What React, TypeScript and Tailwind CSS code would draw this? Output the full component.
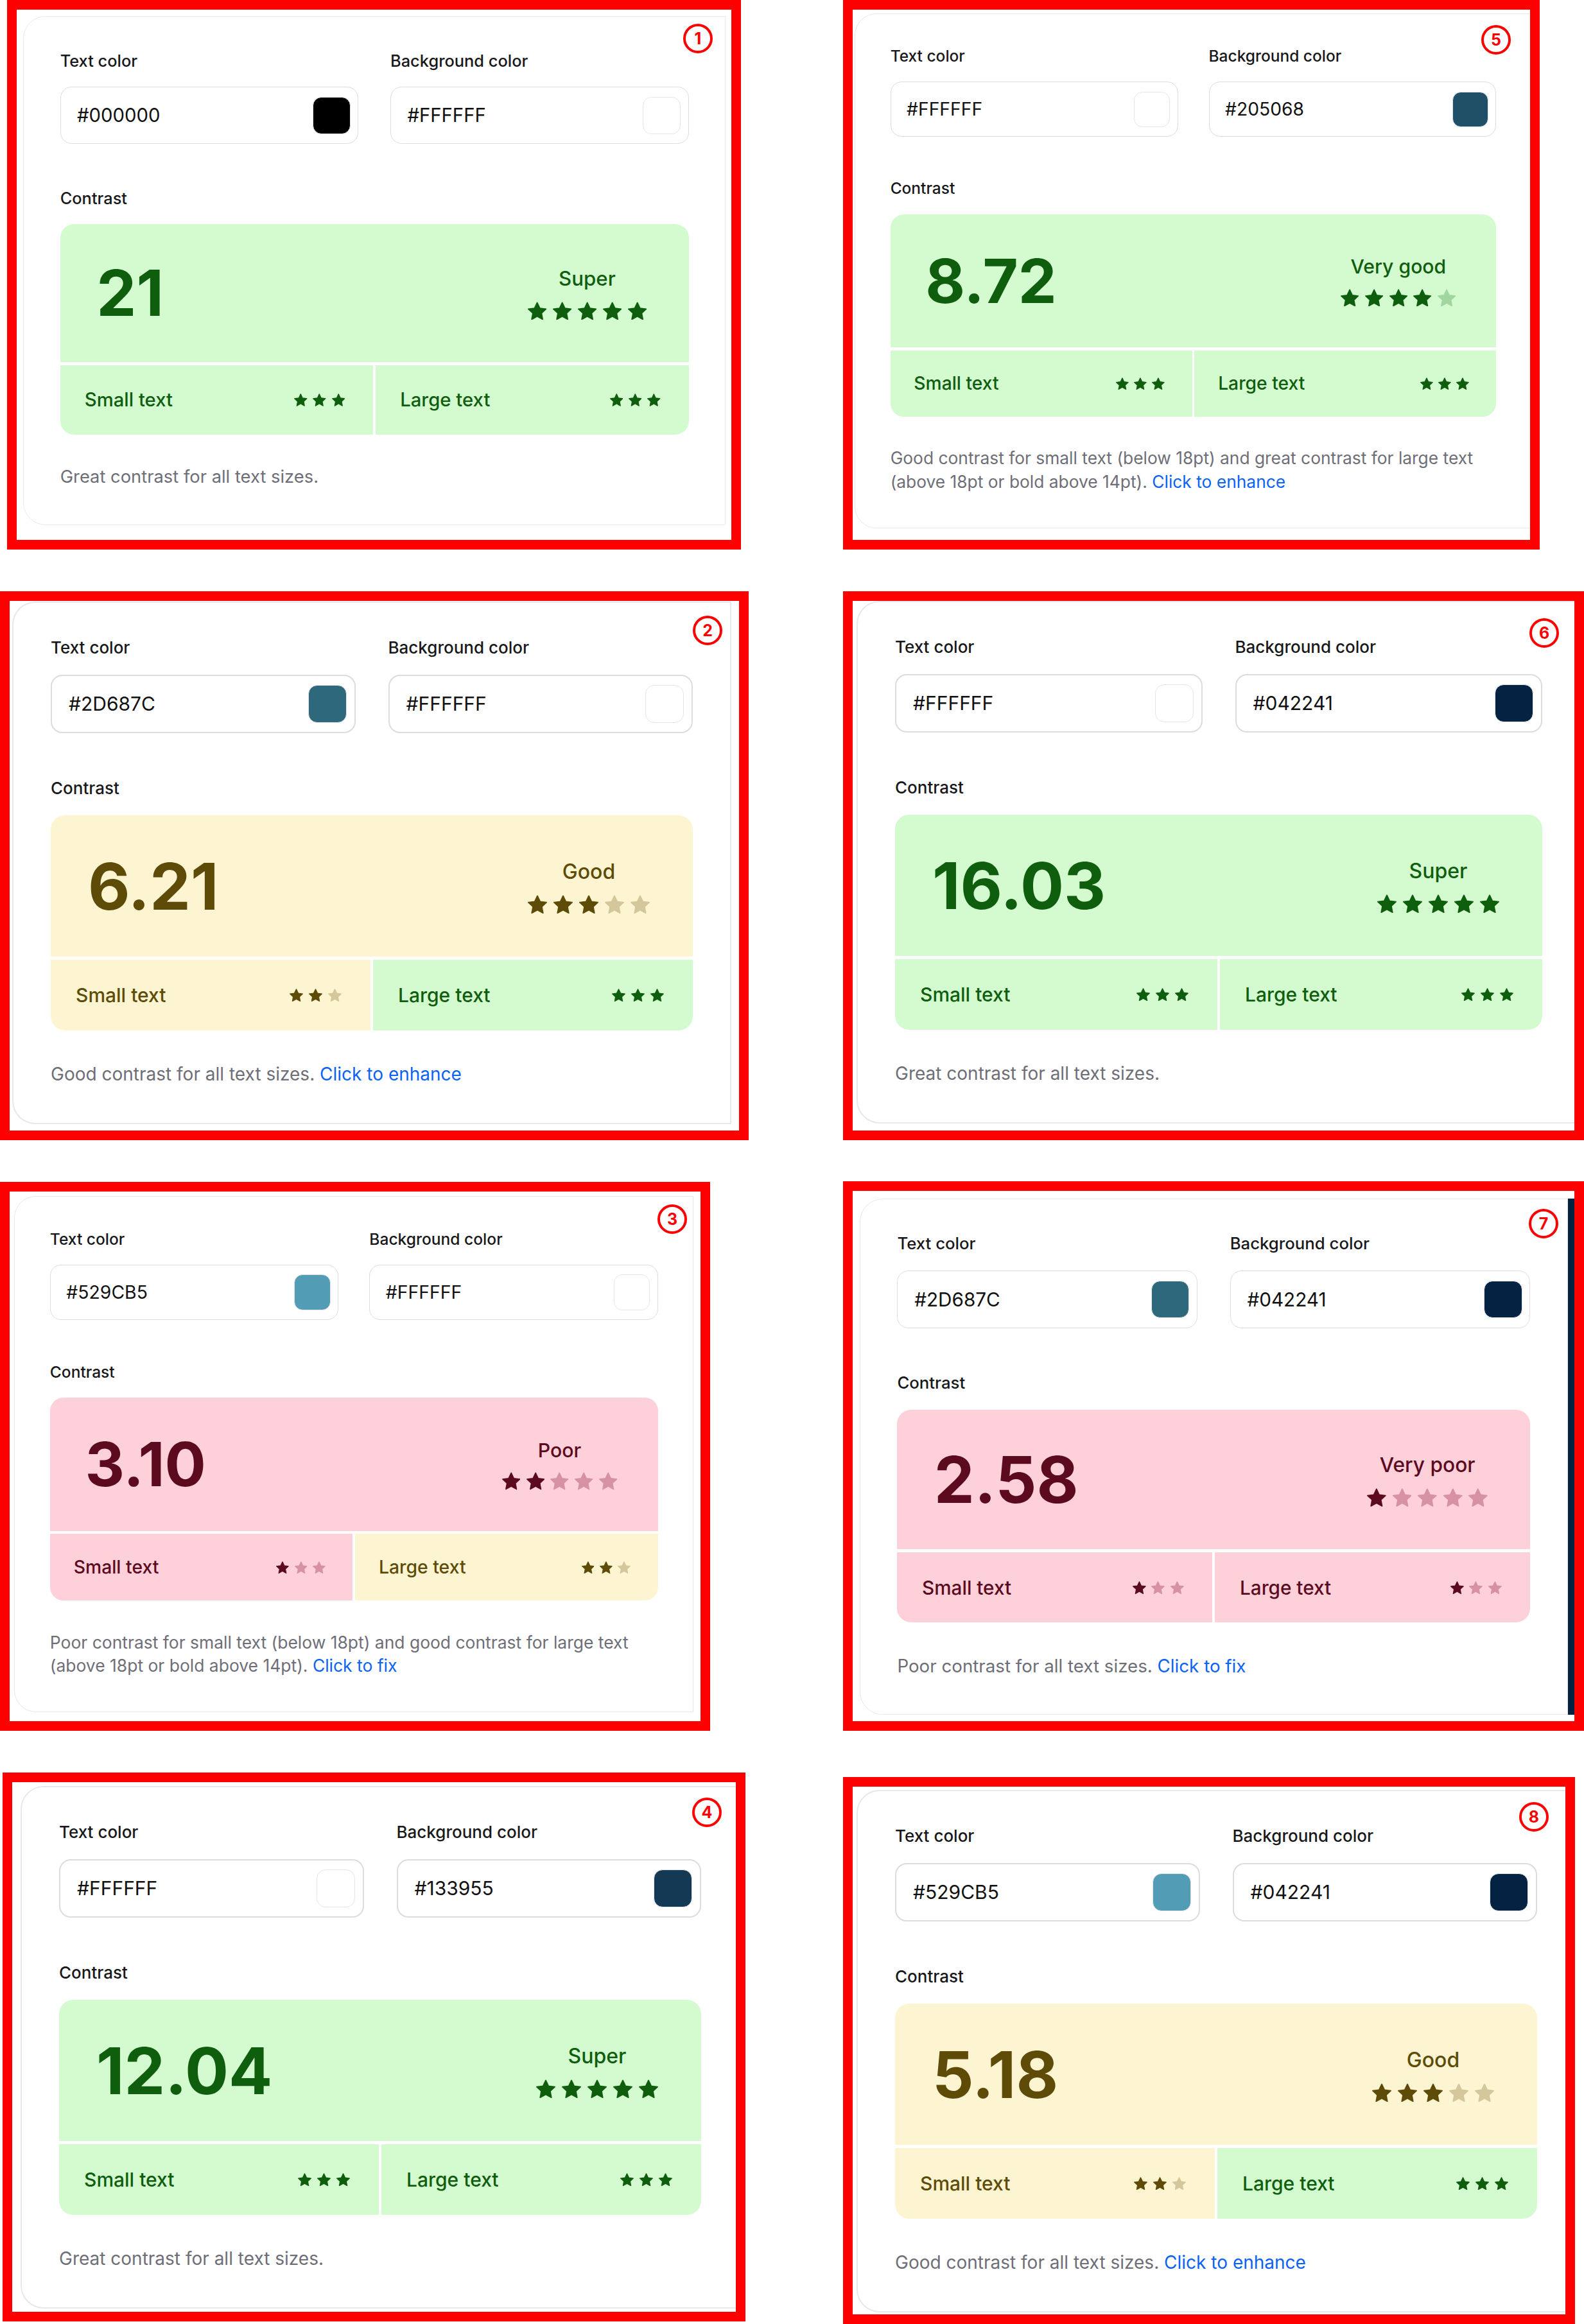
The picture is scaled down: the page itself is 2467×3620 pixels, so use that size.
type Tone = 'green' | 'yellow' | 'pink';

const tones: Record<Tone, { bg: string; text: string; on: string; off: string }> = {
  green: {
    bg: 'bg-[#d4fad0]',
    text: 'text-[#0e5e0e]',
    on: 'fill-[#0e5e0e] stroke-[#0e5e0e]',
    off: 'fill-[#a2d69f] stroke-[#a2d69f]',
  },
  yellow: {
    bg: 'bg-[#fdf5d1]',
    text: 'text-[#5e4b08]',
    on: 'fill-[#5e4b08] stroke-[#5e4b08]',
    off: 'fill-[#d3c79b] stroke-[#d3c79b]',
  },
  pink: {
    bg: 'bg-[#fdd0da]',
    text: 'text-[#5c0a1e]',
    on: 'fill-[#5c0a1e] stroke-[#5c0a1e]',
    off: 'fill-[#d692a2] stroke-[#d692a2]',
  },
};

type Rate = { tone: Tone; stars: number };

type Sample = {
  n: number;
  frame: string;
  inset: string;
  badge: string;
  zoom: string;
  width: string;
  strip?: boolean;
  fg: string;
  bg: string;
  ratio: string;
  rating: string;
  main: Rate;
  small: Rate;
  large: Rate;
  note: string;
  link?: string;
};

// reading order: left column 1-4, right column 5-8
const samples: Sample[] = [
  {
    n: 1, frame: 'ml-[11px] w-[1143px] h-[856px]', inset: 'pl-[10px] pt-[10px]', badge: 'top-[22px] right-[29px]',
    zoom: '[zoom:0.977]', width: 'w-[1120px]',
    fg: '#000000', bg: '#FFFFFF', ratio: '21', rating: 'Super',
    main: { tone: 'green', stars: 5 }, small: { tone: 'green', stars: 3 }, large: { tone: 'green', stars: 3 },
    note: 'Great contrast for all text sizes.',
  },
  {
    n: 5, frame: 'w-[1085px] h-[856px]', inset: 'pl-[3px] pt-[6px]', badge: 'top-[24px] right-[30px]',
    zoom: '[zoom:0.942]', width: 'w-[1120px]',
    fg: '#FFFFFF', bg: '#205068', ratio: '8.72', rating: 'Very good',
    main: { tone: 'green', stars: 4 }, small: { tone: 'green', stars: 3 }, large: { tone: 'green', stars: 3 },
    note: 'Good contrast for small text (below 18pt) and great contrast for large text (above 18pt or bold above 14pt).',
    link: 'Click to enhance',
  },
  {
    n: 2, frame: 'w-[1166px] h-[855px]', inset: 'pl-[4px] pt-[1px]', badge: 'top-[23px] right-[26px]',
    zoom: '[zoom:1]', width: 'w-[1120px]',
    fg: '#2D687C', bg: '#FFFFFF', ratio: '6.21', rating: 'Good',
    main: { tone: 'yellow', stars: 3 }, small: { tone: 'yellow', stars: 2 }, large: { tone: 'green', stars: 3 },
    note: 'Good contrast for all text sizes.', link: 'Click to enhance',
  },
  {
    n: 6, frame: 'w-[1154px] h-[855px]', inset: 'pl-[6px] pt-0', badge: 'top-[27px] right-[24px]',
    zoom: '[zoom:1]', width: 'w-[1128px]',
    fg: '#FFFFFF', bg: '#042241', ratio: '16.03', rating: 'Super',
    main: { tone: 'green', stars: 5 }, small: { tone: 'green', stars: 3 }, large: { tone: 'green', stars: 3 },
    note: 'Great contrast for all text sizes.',
  },
  {
    n: 3, frame: 'mt-[1px] w-[1106px] h-[855px]', inset: 'pl-[7px] pt-[7px]', badge: 'top-[20px] right-[21px]',
    zoom: '[zoom:0.945]', width: 'w-[1120px]',
    fg: '#529CB5', bg: '#FFFFFF', ratio: '3.10', rating: 'Poor',
    main: { tone: 'pink', stars: 2 }, small: { tone: 'pink', stars: 1 }, large: { tone: 'yellow', stars: 2 },
    note: 'Poor contrast for small text (below 18pt) and good contrast for large text (above 18pt or bold above 14pt).',
    link: 'Click to fix',
  },
  {
    n: 7, frame: 'w-[1154px] h-[856px]', inset: 'pl-[11px] pt-[12px]', badge: 'top-[28px] right-[25px]',
    zoom: '[zoom:0.99]', width: 'w-[1114px]', strip: true,
    fg: '#2D687C', bg: '#042241', ratio: '2.58', rating: 'Very poor',
    main: { tone: 'pink', stars: 1 }, small: { tone: 'pink', stars: 1 }, large: { tone: 'pink', stars: 1 },
    note: 'Poor contrast for all text sizes.', link: 'Click to fix',
  },
  {
    n: 4, frame: 'ml-[4px] w-[1157px] h-[855px]', inset: 'pl-[13px] pt-[6px]', badge: 'top-[24px] right-[22px]',
    zoom: '[zoom:1]', width: 'w-[1120px]',
    fg: '#FFFFFF', bg: '#133955', ratio: '12.04', rating: 'Super',
    main: { tone: 'green', stars: 5 }, small: { tone: 'green', stars: 3 }, large: { tone: 'green', stars: 3 },
    note: 'Great contrast for all text sizes.',
  },
  {
    n: 8, frame: 'mt-[7px] w-[1140px] h-[852px]', inset: 'pl-[6px] pt-[5px]', badge: 'top-[24px] right-[26px]',
    zoom: '[zoom:1]', width: 'w-[1120px]',
    fg: '#529CB5', bg: '#042241', ratio: '5.18', rating: 'Good',
    main: { tone: 'yellow', stars: 3 }, small: { tone: 'yellow', stars: 2 }, large: { tone: 'green', stars: 3 },
    note: 'Good contrast for all text sizes.', link: 'Click to enhance',
  },
];

const Star = ({ className }: { className: string }) => (
  <svg viewBox="2 2 20 19" className={className}>
    <path
      d="M12 2.8l2.85 5.95 6.55.85-4.8 4.5 1.22 6.5L12 17.4l-5.82 3.2 1.22-6.5-4.8-4.5 6.55-.85z"
      strokeWidth="1.2"
      strokeLinejoin="round"
    />
  </svg>
);

const Stars = ({ total, rate, big }: { total: number; rate: Rate; big?: boolean }) => {
  const t = tones[rate.tone];
  return (
    <div className={`flex ${big ? 'gap-[10px]' : 'gap-[9px]'}`}>
      {Array.from({ length: total }, (_, i) => (
        <Star
          key={i}
          className={`${big ? 'w-[30px] h-[29px]' : 'w-[21px] h-[20px]'} ${i < rate.stars ? t.on : t.off}`}
        />
      ))}
    </div>
  );
};

const ColorField = ({ label, value }: { label: string; value: string }) => (
  <div className="flex-1 min-w-0">
    <div className="text-[26px] leading-[36px] font-medium text-[#18181b]">{label}</div>
    <div className="mt-[24px] h-[91px] flex items-center justify-between rounded-[18px] border-2 border-[#dcdcdc] pl-[26px] pr-[12px]">
      <span className="text-[30px] text-[#111111]">{value}</span>
      <span
        className="w-[60px] h-[59px] rounded-[14px] border border-[#e6e6e6]"
        style={{ backgroundColor: value }}
      />
    </div>
  </div>
);

const SizeCell = ({ label, rate, side }: { label: string; rate: Rate; side: 'l' | 'r' }) => {
  const t = tones[rate.tone];
  return (
    <div
      className={`h-[110px] flex items-center justify-between pl-[39px] pr-[45px] ${t.bg} ${
        side === 'l' ? 'rounded-bl-[22px]' : 'rounded-br-[22px]'
      }`}
    >
      <span className={`text-[30px] font-medium ${t.text}`}>{label}</span>
      <Stars total={3} rate={rate} />
    </div>
  );
};

const Card = ({ s }: { s: Sample }) => {
  const t = tones[s.main.tone];
  return (
    <div
      className={`shrink-0 rounded-l-[36px] border-2 border-[#e8e8e8] bg-white px-[58px] pt-[52px] pb-[56px] ${s.width} ${s.zoom}`}
    >
      <div className="flex gap-[51px]">
        <ColorField label="Text color" value={s.fg} />
        <ColorField label="Background color" value={s.bg} />
      </div>

      <div className="mt-[68px] text-[26px] leading-[36px] font-medium text-[#18181b]">Contrast</div>

      <div className="mt-[24px]">
        <div className={`h-[220px] flex items-center justify-between rounded-t-[22px] pl-[58px] pr-[67px] ${t.bg}`}>
          <span className={`text-[101px] leading-none font-bold ${t.text}`}>{s.ratio}</span>
          <div className="flex flex-col items-center gap-[16px]">
            <span className={`text-[32px] leading-[40px] font-medium ${t.text}`}>{s.rating}</span>
            <Stars total={5} rate={s.main} big />
          </div>
        </div>
        <div className="mt-[5px] grid grid-cols-2 gap-[4px]">
          <SizeCell label="Small text" rate={s.small} side="l" />
          <SizeCell label="Large text" rate={s.large} side="r" />
        </div>
      </div>

      <p className="mt-[49px] text-[28px] leading-[39px] text-[#6e6e78]">
        {s.note}
        {s.link && (
          <>
            {' '}
            <span className="text-[#0b62f6]">{s.link}</span>
          </>
        )}
      </p>
    </div>
  );
};

const Frame = ({ s }: { s: Sample }) => (
  <div className={`relative overflow-hidden border-[15px] border-[#ff0000] bg-white ${s.frame}`}>
    <div className={`flex items-stretch ${s.inset}`}>
      <Card s={s} />
      {s.strip && <div className="w-[14px] shrink-0 bg-[#042241]" />}
    </div>
    <div
      className={`absolute w-[46px] h-[46px] flex items-center justify-center rounded-full border-4 border-[#ff0000] bg-white text-[25px] leading-none font-bold text-[#ff0000] ${s.badge}`}
    >
      {s.n}
    </div>
  </div>
);

export default function App() {
  return (
    <div className="w-[2467px] h-[3620px] overflow-hidden bg-white font-['Inter','Noto_Sans',sans-serif] grid grid-cols-[1313px_1154px] grid-rows-[921px_919px_921px_859px] items-start justify-items-start">
      {samples.map((s) => (
        <Frame key={s.n} s={s} />
      ))}
    </div>
  );
}
